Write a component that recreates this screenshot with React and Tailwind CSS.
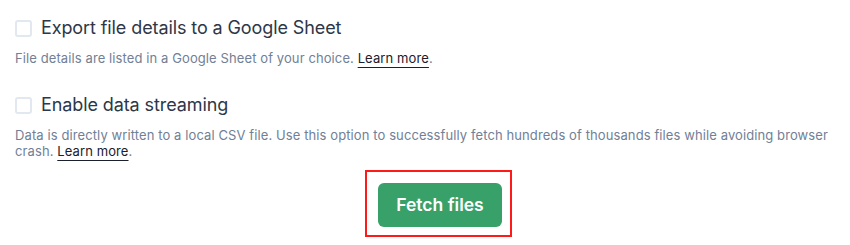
import React from 'react';

const Option = ({ label, children }) => (
  <div className="flex flex-col">
    <label className="flex items-center gap-[9px] h-[28px]">
      <span className="w-[17px] h-[17px] rounded-[3px] border-2 border-[#e2e8f0] bg-white shrink-0" />
      <span className="text-[18px] leading-[28px] tracking-[-0.1px] text-[#2d3748]">{label}</span>
    </label>
    <p className="mt-[8px] text-[13px] leading-[16px] tracking-[0.1px] text-[#718096]">{children}</p>
  </div>
);

const LearnMore = () => (
  <a className="text-[#1a202c] underline decoration-1 underline-offset-[4px]">Learn more</a>
);

export default function App() {
  return (
    <div className="w-[850px] h-[245px] bg-white px-[15px] pt-[14px] font-['Inter',sans-serif]">
      <div className="flex flex-col gap-[25px]">
        <Option label="Export file details to a Google Sheet">
          File details are listed in a Google Sheet of your choice. <LearnMore />.
        </Option>
        <Option label="Enable data streaming">
          Data is directly written to a local CSV file. Use this option to successfully fetch hundreds of thousands files while avoiding browser crash. <LearnMore />.
        </Option>
      </div>
      <div className="flex justify-center pl-[27px] mt-[11px]">
        <div className="border-2 border-[#ff1a1a] pl-[11px] pt-[11px] pr-[8px] pb-[8px]">
          <button className="h-[44px] w-[124px] rounded-[6px] bg-[#38a169] text-white text-[17.5px] font-semibold">
            Fetch files
          </button>
        </div>
      </div>
    </div>
  );
}
